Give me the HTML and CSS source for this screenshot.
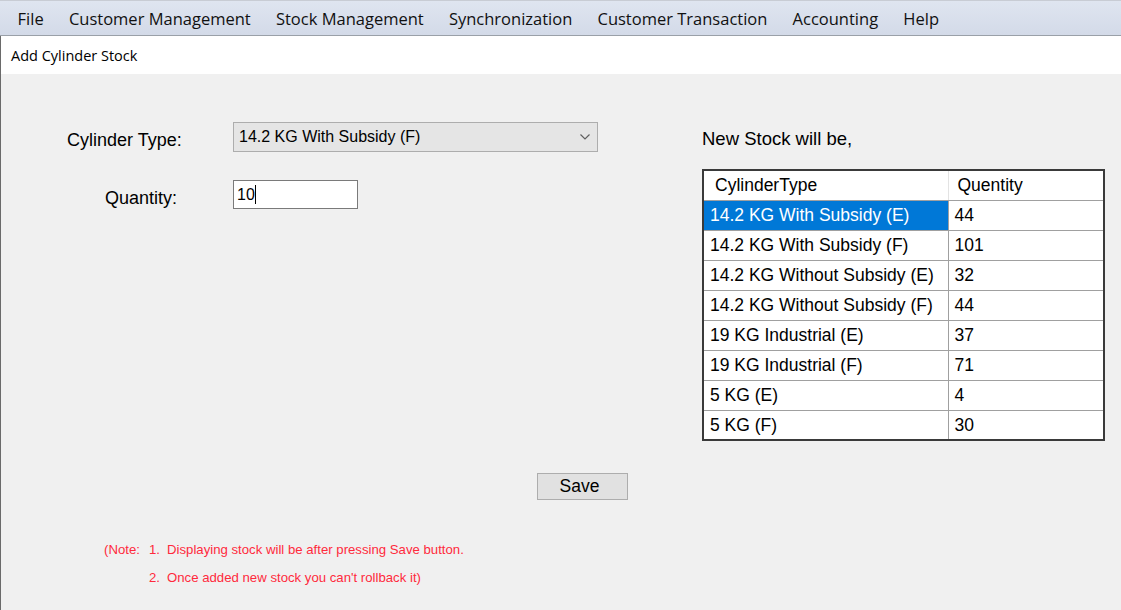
FILE: index.html
```html
<!DOCTYPE html>
<html>
<head>
<meta charset="utf-8">
<link rel="stylesheet" href="styles.css">
</head>
<body>
<nav class="menubar">
  <span class="menu-item">File</span>
  <span class="menu-item">Customer Management</span>
  <span class="menu-item">Stock Management</span>
  <span class="menu-item">Synchronization</span>
  <span class="menu-item">Customer Transaction</span>
  <span class="menu-item">Accounting</span>
  <span class="menu-item">Help</span>
</nav>
<div class="window">
  <div class="titlebar">Add Cylinder Stock</div>
  <div class="content">
    <div class="main">
      <div class="form">
        <div class="field-row">
          <label class="label label-type">Cylinder Type:</label>
          <div class="combo">
            <span class="combo-text">14.2 KG With Subsidy (F)</span>
            <svg class="chevron" width="10" height="6" viewBox="0 0 10 6"><path d="M0.5 0.5 L5 5 L9.5 0.5" fill="none" stroke="#606060" stroke-width="1.2"/></svg>
          </div>
        </div>
        <div class="field-row row-qty">
          <label class="label label-qty">Quantity:</label>
          <div class="textbox"><span>10</span><span class="caret"></span></div>
        </div>
      </div>
      <div class="stock">
        <div class="stock-title">New Stock will be,</div>
        <table class="grid">
          <thead>
            <tr><th class="col-type">CylinderType</th><th>Quentity</th></tr>
          </thead>
          <tbody>
            <tr><td class="selected">14.2 KG With Subsidy (E)</td><td>44</td></tr>
            <tr><td>14.2 KG With Subsidy (F)</td><td>101</td></tr>
            <tr><td>14.2 KG Without Subsidy (E)</td><td>32</td></tr>
            <tr><td>14.2 KG Without Subsidy (F)</td><td>44</td></tr>
            <tr><td>19 KG Industrial (E)</td><td>37</td></tr>
            <tr><td>19 KG Industrial (F)</td><td>71</td></tr>
            <tr><td>5 KG (E)</td><td>4</td></tr>
            <tr><td>5 KG (F)</td><td>30</td></tr>
          </tbody>
        </table>
      </div>
    </div>
    <div class="actions">
      <button class="btn">Save</button>
    </div>
    <div class="notes">
      <div class="note-line"><span class="note-prefix">(Note:</span><span class="note-num">1.</span><span>Displaying stock will be after pressing Save button.</span></div>
      <div class="note-line note-indent"><span class="note-num">2.</span><span>Once added new stock you can't rollback it)</span></div>
    </div>
  </div>
</div>
</body>
</html>
```
FILE: styles.css
```css
* { box-sizing: border-box; }
html, body { margin: 0; padding: 0; }
body {
  width: 1121px;
  height: 610px;
  overflow: hidden;
  background: #f0f0f0;
  font-family: "Liberation Sans", Arial, sans-serif;
  color: #000;
}
.menubar {
  height: 36px;
  display: flex;
  align-items: center;
  padding-left: 5px;
  padding-top: 1px;
  background: linear-gradient(#dfe5f0, #d3dae8);
  border-top: 1px solid #c8ccd4;
  border-bottom: 1px solid #9aa0a8;
  font-family: "Open Sans", "Noto Sans", sans-serif;
  font-size: 16.5px;
  color: #111;
}
.menu-item { padding: 0 12.6px; white-space: nowrap; }
.window {
  border-left: 1px solid #6a6a6a;
  height: 574px;
  display: flex;
  flex-direction: column;
}
.titlebar {
  height: 38px;
  background: #fff;
  padding-left: 10px;
  display: flex;
  align-items: center;
  font-family: "Open Sans", "Noto Sans", sans-serif;
  font-size: 14.5px;
  color: #000;
}
.content {
  flex: 1;
  background: #f0f0f0;
}
.main {
  display: grid;
  grid-template-columns: 635px 403px;
  padding: 48px 0 0 66px;
}
.form { display: flex; flex-direction: column; }
.field-row { display: flex; align-items: center; }
.row-qty { margin-top: 28px; }
.label { font-size: 18px; width: 166px; padding-top: 7px; }
.label-qty { padding-left: 38px; }
.combo {
  width: 365px;
  height: 30px;
  background: #e5e5e5;
  border: 1px solid #adadad;
  display: flex;
  align-items: center;
  justify-content: space-between;
  padding: 0 6px 0 5px;
  font-size: 16px;
}
.chevron { margin-right: 1px; }
.textbox {
  width: 125px;
  height: 29px;
  background: #fff;
  border: 1px solid #7a7a7a;
  display: flex;
  align-items: center;
  padding-left: 3px;
  font-size: 16px;
}
.caret { width: 1px; height: 19px; background: #000; margin-left: 0; }
.stock { display: flex; flex-direction: column; }
.stock-title { font-size: 18.5px; margin-top: 6px; height: 41px; }
.grid {
  border-collapse: collapse;
  width: 403px;
  border: 2px solid #3a3a3a;
  background: #fff;
  font-size: 17.5px;
}
.grid th, .grid td {
  height: 30px;
  padding: 1px 6px 0;
  text-align: left;
  font-weight: normal;
  border: 1px solid #a0a0a0;
  white-space: nowrap;
}
.grid th { padding-left: 11px; border-right-color: #e3e3e3; }
.grid th + th { padding-left: 9px; }
.col-type { width: 245px; }
.grid td.selected { background: #0078d7; color: #fff; }
.actions { padding: 32px 0 0 536px; }
.btn {
  width: 91px;
  height: 27px;
  background: #e1e1e1;
  border: 1px solid #adadad;
  border-radius: 0;
  font-family: "Liberation Sans", Arial, sans-serif;
  font-size: 17.5px;
  color: #000;
  padding: 0 6px 0 0;
}
.notes {
  padding: 35px 0 0 103px;
  color: #ff2a3c;
  font-size: 13.2px;
}
.note-line { display: flex; height: 28px; align-items: center; white-space: pre; }
.note-prefix { width: 45px; }
.note-num { width: 18px; }
.note-indent { padding-left: 45px; }
```
